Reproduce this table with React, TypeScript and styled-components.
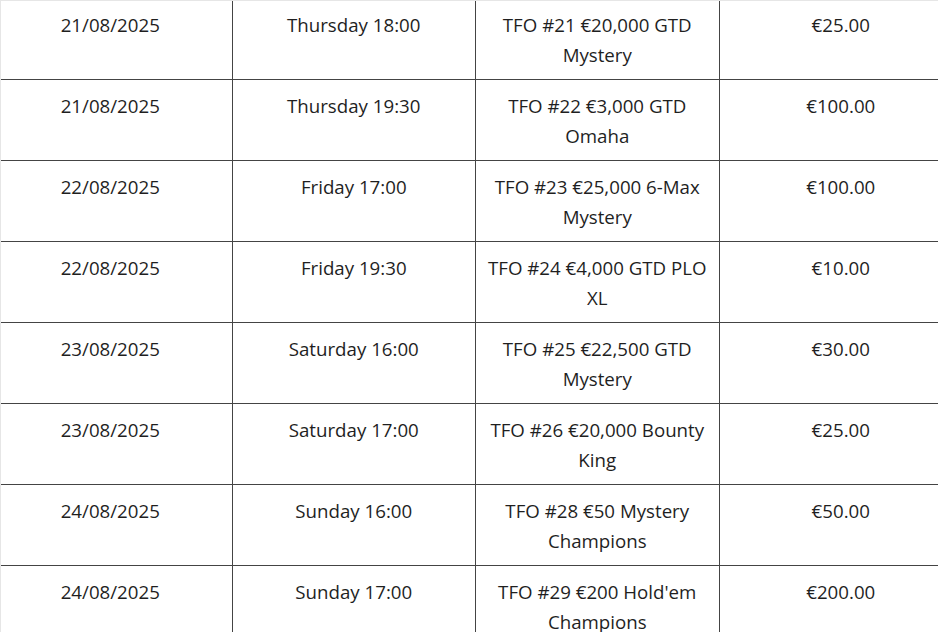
import React from "react";
import styled, { createGlobalStyle } from "styled-components";

const Global = createGlobalStyle`
  html, body { margin: 0; padding: 0; background: #fff; }
  body { font-family: "Open Sans", "Noto Sans", sans-serif; }
`;

const Frame = styled.div`
  width: 938px;
  height: 632px;
  box-sizing: border-box;
  overflow: hidden;
  border-top: 1px solid #e6e6e6;
  border-left: 1px solid #e6e6e6;
  background: #fff;
`;

const Table = styled.table`
  border-collapse: collapse;
  table-layout: fixed;
  width: 975px;
  margin-left: -13px;
  margin-top: -3px;
  color: #1f1f1f;
  font-size: 18.7px;
  line-height: 30px;
`;

const Cell = styled.td`
  border: 1px solid #444;
  width: 243px;
  height: 80px;
  box-sizing: border-box;
  padding: 11px 4px 9px;
  text-align: center;
  vertical-align: top;
`;

const Line = styled.span`
  display: block;
  white-space: nowrap;
`;

type Row = { date: string; time: string; event: string[]; buyin: string };

const rows: Row[] = [
  { date: "21/08/2025", time: "Thursday 18:00", event: ["TFO #21 €20,000 GTD", "Mystery"], buyin: "€25.00" },
  { date: "21/08/2025", time: "Thursday 19:30", event: ["TFO #22 €3,000 GTD", "Omaha"], buyin: "€100.00" },
  { date: "22/08/2025", time: "Friday 17:00", event: ["TFO #23 €25,000 6-Max", "Mystery"], buyin: "€100.00" },
  { date: "22/08/2025", time: "Friday 19:30", event: ["TFO #24 €4,000 GTD PLO", "XL"], buyin: "€10.00" },
  { date: "23/08/2025", time: "Saturday 16:00", event: ["TFO #25 €22,500 GTD", "Mystery"], buyin: "€30.00" },
  { date: "23/08/2025", time: "Saturday 17:00", event: ["TFO #26 €20,000 Bounty", "King"], buyin: "€25.00" },
  { date: "24/08/2025", time: "Sunday 16:00", event: ["TFO #28 €50 Mystery", "Champions"], buyin: "€50.00" },
  { date: "24/08/2025", time: "Sunday 17:00", event: ["TFO #29 €200 Hold'em", "Champions"], buyin: "€200.00" },
];

export default function App() {
  return (
    <>
      <Global />
      <Frame>
        <Table>
          <tbody>
            {rows.map((r, i) => (
              <tr key={i}>
                <Cell>{r.date}</Cell>
                <Cell>{r.time}</Cell>
                <Cell>
                  {r.event.map((l, j) => (
                    <Line key={j}>{l}</Line>
                  ))}
                </Cell>
                <Cell>{r.buyin}</Cell>
              </tr>
            ))}
          </tbody>
        </Table>
      </Frame>
    </>
  );
}
